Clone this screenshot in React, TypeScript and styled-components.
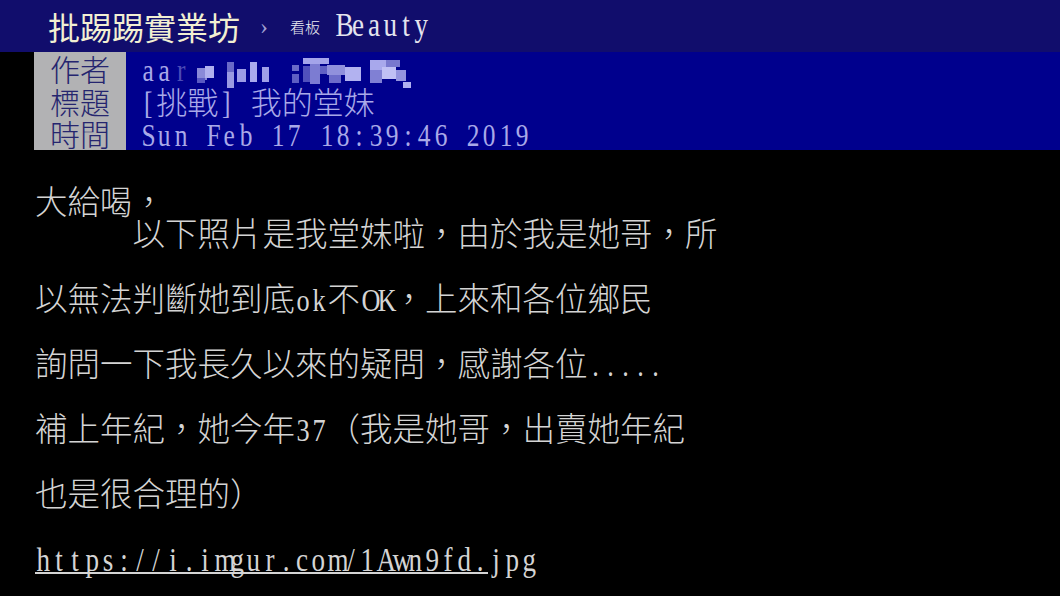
import React from 'react';

// Libraries
import styled, {createGlobalStyle} from 'styled-components';

const CJK = `"Noto Sans CJK TC", "Noto Sans CJK SC", sans-serif`;
const SERIF = `"Liberation Serif", "Noto Sans CJK TC", serif`;
const ROW = 32.5;

const GlobalStyle = createGlobalStyle`
  html,
  body {
    margin: 0;
    padding: 0;
    background: #000;
  }
`;

const Screen = styled.div`
  width: 1060px;
  height: 596px;
  overflow: hidden;
  background: #000;
  font-family: ${CJK};
  font-weight: 300;
`;

// Terminal-like fixed width run: every latin char sits in its own cell
const Run = styled.span<{$size: number; $underline?: boolean}>`
  display: inline-block;
  font-family: ${SERIF};
  font-size: ${({$size}) => $size}px;
  font-weight: 400;
  line-height: 24px;
  border-bottom: ${({$underline}) =>
    $underline ? '2px solid currentColor' : '2px solid transparent'};
  white-space: pre;
`;

const Cell = styled.span<{$w: number}>`
  display: inline-block;
  width: ${({$w}) => $w}px;
  text-align: center;
  transform: scaleX(0.82);
`;

interface MonoProps {
  text: string;
  cell?: number;
  size?: number;
  underline?: boolean;
}

const Mono: React.FC<MonoProps> = ({
  text,
  cell = 16.25,
  size = 32,
  underline,
}) => (
  <Run $size={size} $underline={underline}>
    {text.split('').map((ch, i) => (
      <Cell key={i} $w={cell}>
        {ch}
      </Cell>
    ))}
  </Run>
);

// Top bar
const TopBar = styled.header`
  height: 52px;
  display: flex;
  align-items: center;
  padding-left: 48px;
  background: #110d6c;
  box-sizing: border-box;
`;

const SiteTitle = styled.h1`
  margin: 0;
  font-family: ${CJK};
  font-size: 32px;
  font-weight: 400;
  line-height: 1;
  color: #f2efd2;
`;

const Crumb = styled.span`
  margin: 0 22px 0 20px;
  font-family: ${SERIF};
  font-size: 24px;
  color: #a0a0d2;
`;

const BoardLabel = styled.span`
  font-family: ${CJK};
  font-size: 15px;
  color: #ececf2;
  margin-right: 14px;
`;

const BoardName = styled.span`
  color: #e4e4ee;
  padding-top: 2px;
`;

// Article header
const Meta = styled.div`
  margin-left: 34px;
  background: #00008d;
`;

const MetaRow = styled.div`
  display: flex;
  height: ${ROW}px;
`;

const MetaLabel = styled.div`
  width: 92px;
  flex-shrink: 0;
  background: #b2b2b4;
  color: #25256f;
  font-family: ${CJK};
  font-size: 30px;
  line-height: ${ROW}px;
  text-align: center;
`;

const MetaValue = styled.div`
  padding-left: 14px;
  color: #a9a9e8;
  font-family: ${CJK};
  font-size: 31px;
  line-height: ${ROW}px;
  white-space: pre;

  svg {
    vertical-align: middle;
  }
`;

const Faded = styled.span`
  opacity: 0.45;
`;

// Article body
const Body = styled.div`
  padding: 34px 0 0 35px;
  color: #d4d4d4;
  font-family: ${CJK};
  font-size: 32.5px;
`;

const Line = styled.div`
  height: ${ROW}px;
  line-height: ${ROW}px;
  white-space: pre;
`;

type Block = [number, number, number, number, string];

// Rough mosaic over the author's id
const MOSAIC: Block[] = [
  [8, 10, 10, 12, '#8a8ad8'],
  [16, 8, 9, 12, '#b0b0ee'],
  [8, 20, 8, 5, '#5a5ac2'],
  [38, 4, 7, 10, '#6a6ac8'],
  [38, 14, 7, 17, '#9a9ae2'],
  [48, 11, 9, 13, '#9c9ce6'],
  [61, 4, 7, 20, '#aaaaee'],
  [73, 9, 7, 15, '#a0a0e8'],
  [103, 7, 7, 6, '#6a6ac8'],
  [103, 16, 7, 9, '#5e5ec4'],
  [114, 0, 26, 6, '#a4a4ea'],
  [114, 8, 8, 16, '#5050bc'],
  [121, 6, 10, 20, '#7c7cd2'],
  [131, 8, 7, 8, '#6060c4'],
  [138, 7, 18, 10, '#9090dc'],
  [140, 17, 12, 8, '#6c6cca'],
  [156, 9, 16, 14, '#b2b2f0'],
  [181, 2, 16, 10, '#a8a8ec'],
  [197, 2, 14, 7, '#7878ce'],
  [181, 12, 12, 13, '#8080d4'],
  [193, 9, 14, 12, '#c0c0f4'],
  [207, 12, 10, 11, '#9494de'],
  [214, 24, 8, 6, '#b0b0f0'],
];

const Mosaic: React.FC = () => (
  <svg width="230" height="30" viewBox="0 0 230 30">
    {MOSAIC.map(([x, y, w, h, fill], i) => (
      <rect key={i} x={x} y={y} width={w} height={h} fill={fill} />
    ))}
  </svg>
);

const App: React.FC = () => {
  return (
    <>
      <GlobalStyle />
      <Screen>
        <TopBar>
          <SiteTitle>批踢踢實業坊</SiteTitle>
          <Crumb>›</Crumb>
          <BoardLabel>看板</BoardLabel>
          <BoardName>
            <Mono text="Beauty" cell={15.9} size={33} />
          </BoardName>
        </TopBar>

        <Meta>
          <MetaRow>
            <MetaLabel>作者</MetaLabel>
            <MetaValue>
              <Mono text="aa" size={31} />
              <Faded>
                <Mono text="r" size={31} />
              </Faded>
              <Mosaic />
            </MetaValue>
          </MetaRow>
          <MetaRow>
            <MetaLabel>標題</MetaLabel>
            <MetaValue>
              <Mono text="[" size={31} />
              挑戰
              <Mono text="] " size={31} />
              我的堂妹
            </MetaValue>
          </MetaRow>
          <MetaRow>
            <MetaLabel>時間</MetaLabel>
            <MetaValue>
              <Mono text="Sun Feb 17 18:39:46 2019" size={31} />
            </MetaValue>
          </MetaRow>
        </Meta>

        <Body>
          <Line>大給喝，</Line>
          <Line>　　　以下照片是我堂妹啦，由於我是她哥，所</Line>
          <Line />
          <Line>
            以無法判斷她到底<Mono text="ok" />不<Mono text="OK" />
            ，上來和各位鄉民
          </Line>
          <Line />
          <Line>
            詢問一下我長久以來的疑問，感謝各位
            <Mono text="....." cell={15} />
          </Line>
          <Line />
          <Line>
            補上年紀，她今年<Mono text="37" />（我是她哥，出賣她年紀
          </Line>
          <Line />
          <Line>也是很合理的）</Line>
          <Line />
          <Line>
            <Mono
              text="https://i.imgur.com/1Awn9fd."
              cell={16.2}
              size={33}
              underline
            />
            <Mono text="jpg" cell={16.2} size={33} />
          </Line>
        </Body>
      </Screen>
    </>
  );
};

export default App;
